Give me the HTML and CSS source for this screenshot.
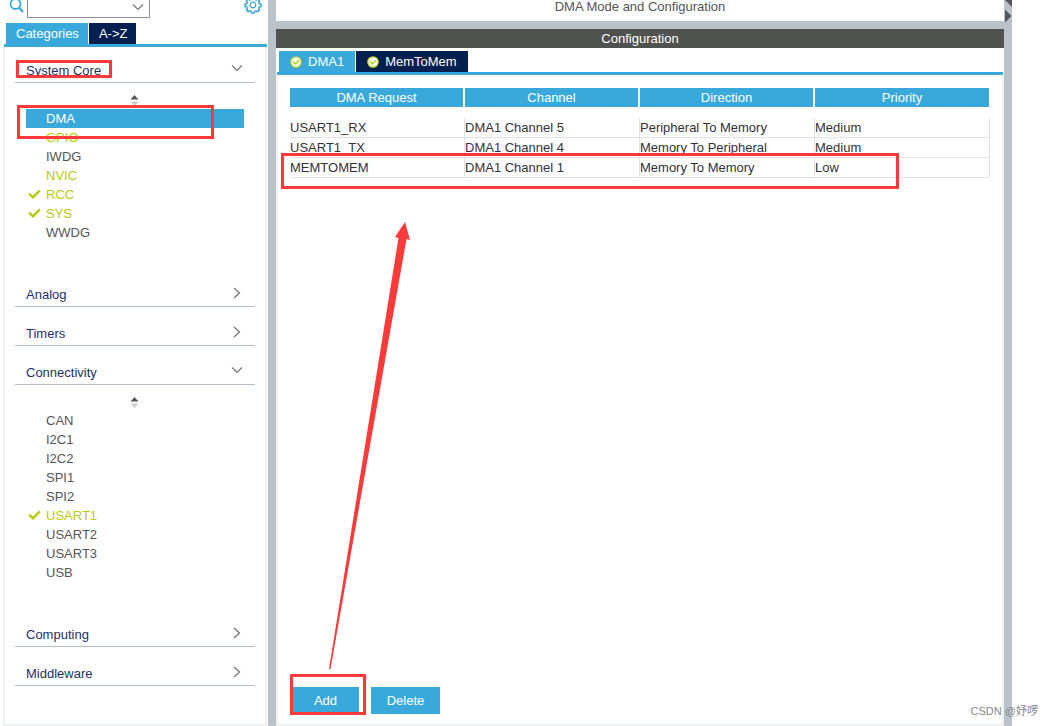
FILE: index.html
```
<!DOCTYPE html>
<html lang="en">
<head>
<meta charset="utf-8">
<title>DMA Mode and Configuration</title>
<link rel="stylesheet" href="styles.css">
</head>
<body>
<svg width="0" height="0" class="defs" aria-hidden="true">
  <symbol id="down" viewBox="0 0 12 8"><path d="M1 1.500L6 6.500L11 1.500" fill="none" stroke="#777" stroke-width="1.200"/></symbol>
  <symbol id="right" viewBox="0 0 8 12"><path d="M1 1L6.500 6L1 11" fill="none" stroke="#777" stroke-width="1.300"/></symbol>
  <symbol id="sort" viewBox="0 0 9 11"><path d="M4.500 0L8.500 4.500H.500Z" fill="#555"/><path d="M.500 6.500H8.500L4.500 11Z" fill="#ccc"/></symbol>
  <symbol id="tick" viewBox="0 0 13 10"><path d="M1.200 4.600L5 8.300L11.800 1.300" fill="none" stroke="#b9cb0c" stroke-width="2.500"/></symbol>
  <symbol id="ok" viewBox="0 0 12 12"><circle cx="6" cy="6" r="5.200" fill="#fff" stroke="#c3d02c" stroke-width="1.300"/><path d="M3 5.400L5.500 8L9 4.300" fill="none" stroke="#b9cb0c" stroke-width="1.500"/></symbol>
</svg>
<div class="app">
  <aside class="sidebar">
    <div class="search">
      <svg class="lens" viewBox="0 0 15 13" aria-hidden="true"><circle cx="6.500" cy="4" r="5" fill="none" stroke="#39a9dc" stroke-width="1.800"/><path d="M10 7.500L14 12" stroke="#39a9dc" stroke-width="2.200"/></svg>
      <div class="combo">
        <select aria-label="Search"><option></option></select>
        <svg class="combo-arrow" width="12" height="8" aria-hidden="true"><use href="#down"/></svg>
      </div>
      <button class="gear" aria-label="Settings"><svg viewBox="0 0 18 16" width="18" height="16"><g fill="none" stroke="#39a9dc"><circle cx="9" cy="5" r="2.800" stroke-width="1.300"/><path stroke-width="1.600" stroke-linejoin="round" d="M7.800 -2.500H10.200L10.800 -.600L12.200 0L13.900 -.900L15.500 .800L14.700 2.400L15.300 3.800L17 4.300V6.500L15.300 7L14.700 8.500L15.500 10L13.900 11.700L12.200 10.900L10.800 11.500L10.200 13H7.800L7.200 11.500L5.800 10.900L4.100 11.700L2.500 10L3.300 8.500L2.700 7L1 6.500V4.300L2.700 3.800L3.300 2.400L2.500 .800L4.100 -.900L5.800 0L7.200 -.600Z"/></g></svg></button>
    </div>
    <div class="tabs side-tabs">
      <button class="tab active">Categories</button>
      <button class="tab">A-&gt;Z</button>
    </div>
    <nav class="panel tree">
      <button class="group first"><span>System Core</span><svg width="12" height="8"><use href="#down"/></svg></button>
      <div class="sort"><svg width="9" height="11"><use href="#sort"/></svg></div>
      <ul>
        <li class="selected">DMA</li>
        <li class="on">GPIO</li>
        <li>IWDG</li>
        <li class="on">NVIC</li>
        <li class="on"><svg width="13" height="10"><use href="#tick"/></svg>RCC</li>
        <li class="on"><svg width="13" height="10"><use href="#tick"/></svg>SYS</li>
        <li>WWDG</li>
      </ul>
      <button class="group"><span>Analog</span><svg width="8" height="12"><use href="#right"/></svg></button>
      <button class="group"><span>Timers</span><svg width="8" height="12"><use href="#right"/></svg></button>
      <button class="group"><span>Connectivity</span><svg width="12" height="8"><use href="#down"/></svg></button>
      <div class="sort"><svg width="9" height="11"><use href="#sort"/></svg></div>
      <ul>
        <li>CAN</li>
        <li>I2C1</li>
        <li>I2C2</li>
        <li>SPI1</li>
        <li>SPI2</li>
        <li class="on"><svg width="13" height="10"><use href="#tick"/></svg>USART1</li>
        <li>USART2</li>
        <li>USART3</li>
        <li>USB</li>
      </ul>
      <button class="group"><span>Computing</span><svg width="8" height="12"><use href="#right"/></svg></button>
      <button class="group"><span>Middleware</span><svg width="8" height="12"><use href="#right"/></svg></button>
    </nav>
  </aside>
  <div class="splitter"></div>
  <main class="main">
    <h1 class="title">DMA Mode and Configuration</h1>
    <div class="divider"></div>
    <h2 class="bar">Configuration</h2>
    <div class="tabs main-tabs">
      <button class="tab active"><svg width="12" height="12"><use href="#ok"/></svg>DMA1</button>
      <button class="tab"><svg width="12" height="12"><use href="#ok"/></svg>MemToMem</button>
    </div>
    <section class="panel content">
      <table>
        <thead><tr><th>DMA Request</th><th>Channel</th><th>Direction</th><th>Priority</th></tr></thead>
        <tbody>
          <tr class="spacer"><td colspan="4"></td></tr>
          <tr><td>USART1_RX</td><td>DMA1 Channel 5</td><td>Peripheral To Memory</td><td>Medium</td></tr>
          <tr><td>USART1_TX</td><td>DMA1 Channel 4</td><td>Memory To Peripheral</td><td>Medium</td></tr>
          <tr><td>MEMTOMEM</td><td>DMA1 Channel 1</td><td>Memory To Memory</td><td>Low</td></tr>
        </tbody>
      </table>
      <div class="actions"><button>Add</button><button>Delete</button></div>
    </section>
  </main>
  <div class="splitter"><svg width="8" height="24" aria-hidden="true"><path d="M1 0H8V7Z M1 9.500L7.500 16L1 22.500Z" fill="#55565a"/></svg></div>
  <div class="margin"></div>
  <svg class="marks" width="1053" height="726" aria-hidden="true">
    <g fill="none" stroke="#fd3a3a" stroke-width="3">
      <rect x="17.500" y="61.500" width="93" height="15"/>
      <rect x="18.500" y="106.500" width="194" height="31"/>
      <rect x="282.500" y="154.500" width="615" height="33"/>
      <rect x="291.500" y="675.500" width="73" height="38"/>
    </g>
    <path d="M405 222L410 240L406.500 239L330.500 669L329 669L398.500 238L395 237Z" fill="#fd3a3a"/>
  </svg>
  <div class="watermark">CSDN @妤啰</div>
</div>
</body>
</html>
```
FILE: styles.css
```
* { box-sizing: border-box; }
body { margin: 0; background: #fff; font: 13px/16px "Liberation Sans", "Noto Sans CJK SC", sans-serif; color: #333; }
button { font: inherit; border: 0; padding: 0; margin: 0; background: none; }
svg { display: block; overflow: hidden; }
.defs { position: absolute; }

.app { position: relative; display: flex; min-height: 100vh; }
.sidebar { flex: 0 0 268px; display: flex; flex-direction: column; padding: 0 1px 0 3px; }
.splitter { flex: 0 0 8px; background: #b9c3c9; }
.main { flex: 1; min-width: 0; display: flex; flex-direction: column; }
.margin { flex: 0 0 41px; }

.search { display: flex; align-items: flex-start; height: 23px; padding: 0 5px 0 6px; }
.lens { width: 15px; height: 13px; margin-right: 3px; }
.combo { position: relative; width: 123px; height: 18px; }
.combo select { appearance: none; width: 100%; height: 100%; border: 1px solid #8c9196; border-top: 0; border-radius: 0; background: #fff; }
.combo-arrow { position: absolute; right: 6px; top: 3px; pointer-events: none; }
.gear { margin-left: auto; }

.tabs { display: flex; gap: 1px; border-bottom: 3px solid #39a9dc; }
.tab { display: flex; align-items: center; height: 21px; padding: 0 11px; background: #021f50; color: #fff; }
.tab.active { background: #39a9dc; }
.side-tabs { padding-left: 2px; margin-left: 1px; }
.side-tabs .tab { padding: 0 9px 0 10px; }
.main-tabs { margin: 3px 1px 0; padding-left: 2px; }
.main-tabs .tab svg { margin-right: 6px; }

.panel { flex: 1; border: 2px solid #f0f1f2; border-top: 0; }
.tree { padding: 0 10px; }
.group { display: flex; justify-content: space-between; align-items: flex-start; width: 100%; height: 39px; padding: 19px 12px 0 11px; border-bottom: 1px solid #b4c0c8; color: #1f2f66; text-align: left; }
.group.first { height: 36px; padding-top: 16px; }
.group svg[width="8"] { margin-right: 2px; }
.group svg[height="8"] { margin-top: 1px; }
.sort { display: flex; justify-content: center; height: 26px; padding: 12px 2px 0 0; }
.tree ul { margin: 0 11px 26px; padding: 0; list-style: none; }
.tree li { position: relative; height: 19px; padding-left: 20px; line-height: 19px; color: #555; }
.tree li.on { color: #b9cb0c; }
.tree li.selected { background: #39a9dc; color: #fff; }
.tree li svg { position: absolute; left: 2px; top: 4px; }

.title { height: 21px; margin: 0; font-size: 13px; line-height: 14px; font-weight: 400; text-align: center; color: #555; }
.divider { height: 8px; background: #b9c3c9; }
.bar { height: 19px; margin: 0; background: #50524f; color: #fff; font-size: 13px; line-height: 19px; font-weight: 400; text-align: center; }
.content { display: flex; flex-direction: column; justify-content: space-between; padding: 13px 12px 10px; }
table { width: 100%; border-collapse: separate; border-spacing: 0; table-layout: fixed; }
th { height: 19px; padding: 0; background: #39a9dc; color: #fff; font-weight: 400; border-right: 2px solid #fff; }
td { height: 20px; padding: 0; border-right: 1px solid #e1e2e4; border-bottom: 1px solid #e1e2e4; color: #333; }
th:last-child { border-right-width: 1px; }
.spacer td { height: 11px; border: 0; }
.actions { display: flex; gap: 12px; padding-left: 2px; }
.actions button { width: 67px; height: 27px; background: #39a9dc; color: #fff; }
.actions button:last-child { width: 69px; }

.marks { position: absolute; left: 0; top: 0; pointer-events: none; }
.watermark { position: absolute; right: 15px; bottom: 7px; font-size: 11px; color: #85888a; }
```
